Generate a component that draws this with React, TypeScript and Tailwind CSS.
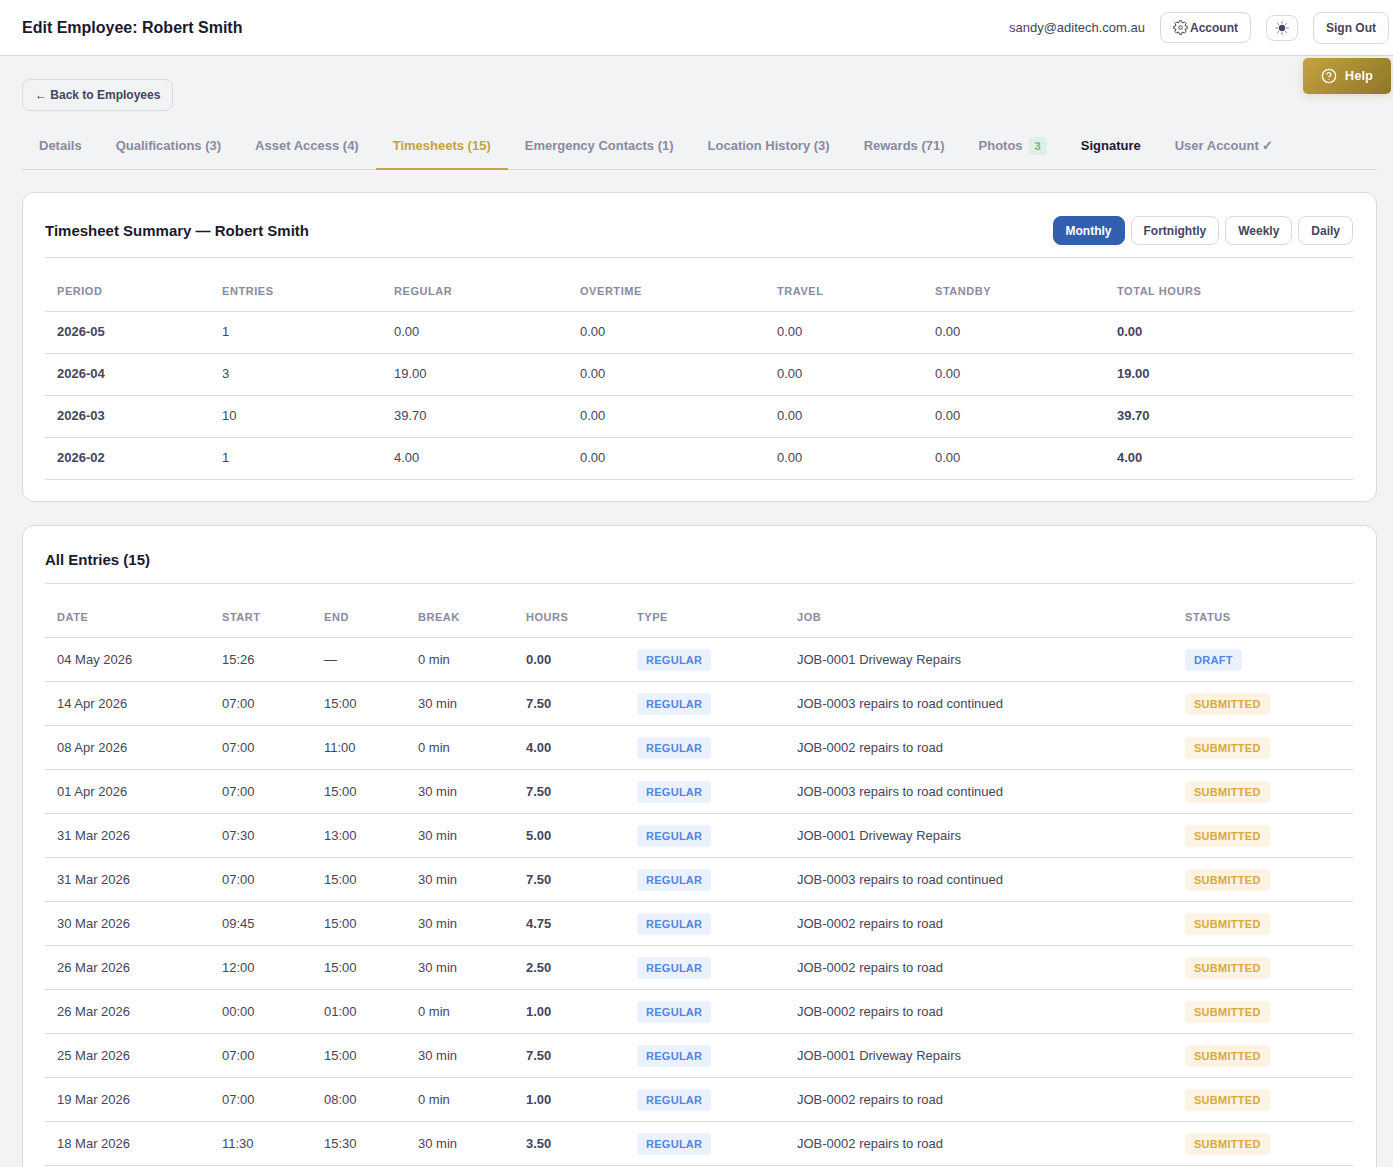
import { useState } from 'react'
import { CircleHelp } from 'lucide-react'

const tabs = [
  { label: 'Details' },
  { label: 'Qualifications (3)' },
  { label: 'Asset Access (4)' },
  { label: 'Timesheets (15)' },
  { label: 'Emergency Contacts (1)' },
  { label: 'Location History (3)' },
  { label: 'Rewards (71)' },
  { label: 'Photos', badge: 3 },
  { label: 'Signature', strong: true },
  { label: 'User Account ✓' },
]

const periods = ['Monthly', 'Fortnightly', 'Weekly', 'Daily']

const summary = [
  { period: '2026-05', entries: 1, regular: '0.00', total: '0.00' },
  { period: '2026-04', entries: 3, regular: '19.00', total: '19.00' },
  { period: '2026-03', entries: 10, regular: '39.70', total: '39.70' },
  { period: '2026-02', entries: 1, regular: '4.00', total: '4.00' },
]

const JOB_1 = 'JOB-0001 Driveway Repairs'
const JOB_2 = 'JOB-0002 repairs to road'
const JOB_3 = 'JOB-0003 repairs to road continued'

const entries = [
  { date: '04 May 2026', start: '15:26', end: '—', rest: 0, hours: '0.00', job: JOB_1, status: 'Draft' },
  { date: '14 Apr 2026', start: '07:00', end: '15:00', rest: 30, hours: '7.50', job: JOB_3, status: 'Submitted' },
  { date: '08 Apr 2026', start: '07:00', end: '11:00', rest: 0, hours: '4.00', job: JOB_2, status: 'Submitted' },
  { date: '01 Apr 2026', start: '07:00', end: '15:00', rest: 30, hours: '7.50', job: JOB_3, status: 'Submitted' },
  { date: '31 Mar 2026', start: '07:30', end: '13:00', rest: 30, hours: '5.00', job: JOB_1, status: 'Submitted' },
  { date: '31 Mar 2026', start: '07:00', end: '15:00', rest: 30, hours: '7.50', job: JOB_3, status: 'Submitted' },
  { date: '30 Mar 2026', start: '09:45', end: '15:00', rest: 30, hours: '4.75', job: JOB_2, status: 'Submitted' },
  { date: '26 Mar 2026', start: '12:00', end: '15:00', rest: 30, hours: '2.50', job: JOB_2, status: 'Submitted' },
  { date: '26 Mar 2026', start: '00:00', end: '01:00', rest: 0, hours: '1.00', job: JOB_2, status: 'Submitted' },
  { date: '25 Mar 2026', start: '07:00', end: '15:00', rest: 30, hours: '7.50', job: JOB_1, status: 'Submitted' },
  { date: '19 Mar 2026', start: '07:00', end: '08:00', rest: 0, hours: '1.00', job: JOB_2, status: 'Submitted' },
  { date: '18 Mar 2026', start: '11:30', end: '15:30', rest: 30, hours: '3.50', job: JOB_2, status: 'Submitted' },
]

export default function App() {
  const [tab, setTab] = useState('Timesheets (15)')
  const [period, setPeriod] = useState('Monthly')

  return (
    <div className="min-h-screen bg-[#f1f3f5] font-['Liberation_Sans',Arial,sans-serif] text-[13px] leading-4 text-[#45455c]">
      <header className="flex h-14 items-center justify-between border-b border-[#d6d6dd] bg-white pl-[22px] pr-1">
        <h1 className="text-base font-bold text-[#1a1a2e]">Edit Employee: Robert Smith</h1>
        <div className="flex items-center gap-[15px]">
          <span>sandy@aditech.com.au</span>
          <button className="flex h-[31px] items-center gap-0.5 rounded-lg border border-[#d9d9e0] bg-white px-3 text-xs font-bold">
            <GearIcon />
            Account
          </button>
          <button aria-label="Toggle theme" className="flex h-[26px] w-8 items-center justify-center rounded-lg border border-[#d9d9e0] bg-white">
            <SunIcon />
          </button>
          <button className="h-8 rounded-lg border border-[#d9d9e0] bg-white px-3 text-xs font-bold">Sign Out</button>
        </div>
      </header>

      <button className="fixed top-[58px] right-0.5 flex h-9 items-center gap-2 rounded-[5px] bg-linear-135 from-[#c4a341] to-[#8f7626] px-[18px] font-bold text-white shadow-[0_2px_8px_rgba(196,163,65,0.3)]">
        <CircleHelp size={16} strokeWidth={2} />
        Help
      </button>

      <main className="pt-[23px] pr-4 pb-6 pl-[22px]">
        <a href="#employees" className="inline-flex h-8 items-center rounded-lg border border-[#d9d9e0] px-3 text-xs font-bold">
          ← Back to Employees
        </a>

        <nav className="mt-3 flex border-b border-[#d6d6dd]">
          {tabs.map(t => (
            <button
              key={t.label}
              onClick={() => setTab(t.label)}
              className={`-mb-px flex h-[47px] items-center border-b-2 px-[17px] font-bold ${
                t.label === tab ? 'border-[#c4a341] text-[#c4a341]' : 'border-transparent'
              } ${t.strong ? 'text-[#1a1a2e]' : t.label === tab ? '' : 'text-[#8a8aa0]'}`}
            >
              {t.label}
              {t.badge && (
                <span className="ml-1.5 rounded bg-[#dfeee6] px-1.5 text-[11px] leading-[18px] text-[#5dbb83]">{t.badge}</span>
              )}
            </button>
          ))}
        </nav>

        <section className="mt-[22px] rounded-xl border border-[#d9d9e0] bg-white pt-[23px] pr-[23px] pb-[21px] pl-[22px]">
          <div className="flex items-center justify-between border-b border-[#d9d9e0] pb-3">
            <h2 className="text-[15px] leading-[22px] font-bold text-[#1a1a2e]">Timesheet Summary — Robert Smith</h2>
            <div className="flex gap-1.5">
              {periods.map(p => (
                <button
                  key={p}
                  onClick={() => setPeriod(p)}
                  className={`h-[29px] rounded-lg border px-3 text-xs font-bold ${
                    p === period ? 'border-[#345fb0] bg-[#345fb0] text-white' : 'border-[#d9d9e0] bg-white'
                  }`}
                >
                  {p}
                </button>
              ))}
            </div>
          </div>

          <table className="mt-3.5 w-full table-fixed border-separate border-spacing-0">
            <thead>
              <tr>
                <Th className="w-[165px]">Period</Th>
                <Th className="w-[172px]">Entries</Th>
                <Th className="w-[186px]">Regular</Th>
                <Th className="w-[197px]">Overtime</Th>
                <Th className="w-[158px]">Travel</Th>
                <Th className="w-[182px]">Standby</Th>
                <Th className="w-[248px]">Total Hours</Th>
              </tr>
            </thead>
            <tbody className="[&_td]:h-[42px] [&_td]:border-b [&_td]:border-[#d9d9e0] [&_td]:px-3 [&_td]:pb-0.5">
              {summary.map(s => (
                <tr key={s.period}>
                  <td className="font-bold">{s.period}</td>
                  <td>{s.entries}</td>
                  <td>{s.regular}</td>
                  <td>0.00</td>
                  <td>0.00</td>
                  <td>0.00</td>
                  <td className="font-bold">{s.total}</td>
                </tr>
              ))}
            </tbody>
          </table>
        </section>

        <section className="mt-[23px] rounded-xl border border-[#d9d9e0] bg-white pt-[23px] pr-[23px] pb-[21px] pl-[22px]">
          <div className="border-b border-[#d9d9e0] pb-3">
            <h2 className="text-[15px] leading-[22px] font-bold text-[#1a1a2e]">All Entries (15)</h2>
          </div>

          <table className="mt-3.5 w-full table-fixed border-separate border-spacing-0">
            <thead>
              <tr>
                <Th className="w-[165px]">Date</Th>
                <Th className="w-[102px]">Start</Th>
                <Th className="w-[94px]">End</Th>
                <Th className="w-[108px]">Break</Th>
                <Th className="w-[111px]">Hours</Th>
                <Th className="w-[160px]">Type</Th>
                <Th className="w-[388px]">Job</Th>
                <Th className="w-[180px]">Status</Th>
              </tr>
            </thead>
            <tbody className="[&_td]:h-11 [&_td]:border-b [&_td]:border-[#d9d9e0] [&_td]:px-3">
              {entries.map(e => (
                <tr key={`${e.date} ${e.start}`}>
                  <td>{e.date}</td>
                  <td>{e.start}</td>
                  <td>{e.end}</td>
                  <td>{e.rest} min</td>
                  <td className="font-bold">{e.hours}</td>
                  <td><Badge label="Regular" color="blue" /></td>
                  <td>{e.job}</td>
                  <td><Badge label={e.status} color={e.status === 'Draft' ? 'blue' : 'amber'} /></td>
                </tr>
              ))}
            </tbody>
          </table>
        </section>
      </main>
    </div>
  )
}

function Th({ children, className }: { children: string; className: string }) {
  return (
    <th className={`h-10 border-b border-[#d9d9e0] px-3 pb-0.5 text-left text-[11px] font-bold tracking-wider text-[#8a8aa0] uppercase ${className}`}>
      {children}
    </th>
  )
}

function Badge({ label, color }: { label: string; color: 'blue' | 'amber' }) {
  const colors = {
    blue: 'bg-[#ebf2fd] text-[#4f86e0]',
    amber: 'bg-[#fcf3e4] text-[#dba83c]',
  }

  return (
    <span className={`block w-fit rounded px-[9px] text-[11px] leading-[22px] font-bold tracking-wide uppercase ${colors[color]}`}>
      {label}
    </span>
  )
}

function GearIcon() {
  return (
    <svg width="15" height="15" viewBox="0 0 24 24" fill="none" stroke="currentColor" strokeWidth="1.6" strokeLinejoin="round">
      <path d="M9.7 4 10.1 1.2H13.9L14.3 4 16 4.7 18.3 3 21 5.7 19.3 8 20 9.7 22.8 10.1V13.9L20 14.3 19.3 16 21 18.3 18.3 21 16 19.3 14.3 20 13.9 22.8H10.1L9.7 20 8 19.3 5.7 21 3 18.3 4.7 16 4 14.3 1.2 13.9V10.1L4 9.7 4.7 8 3 5.7 5.7 3 8 4.7Z" />
      <circle cx="12" cy="12" r="2.800" />
    </svg>
  )
}

function SunIcon() {
  return (
    <svg width="14" height="14" viewBox="0 0 14 14" stroke="currentColor" strokeWidth="0.6">
      <circle cx="7" cy="7" r="3.2" fill="currentColor" stroke="none" />
      <path d="M7 0v3M7 11v3M0 7h3M11 7h3M2 2l2 2M10 10l2 2M12 2l-2 2M4 10l-2 2" />
    </svg>
  )
}
